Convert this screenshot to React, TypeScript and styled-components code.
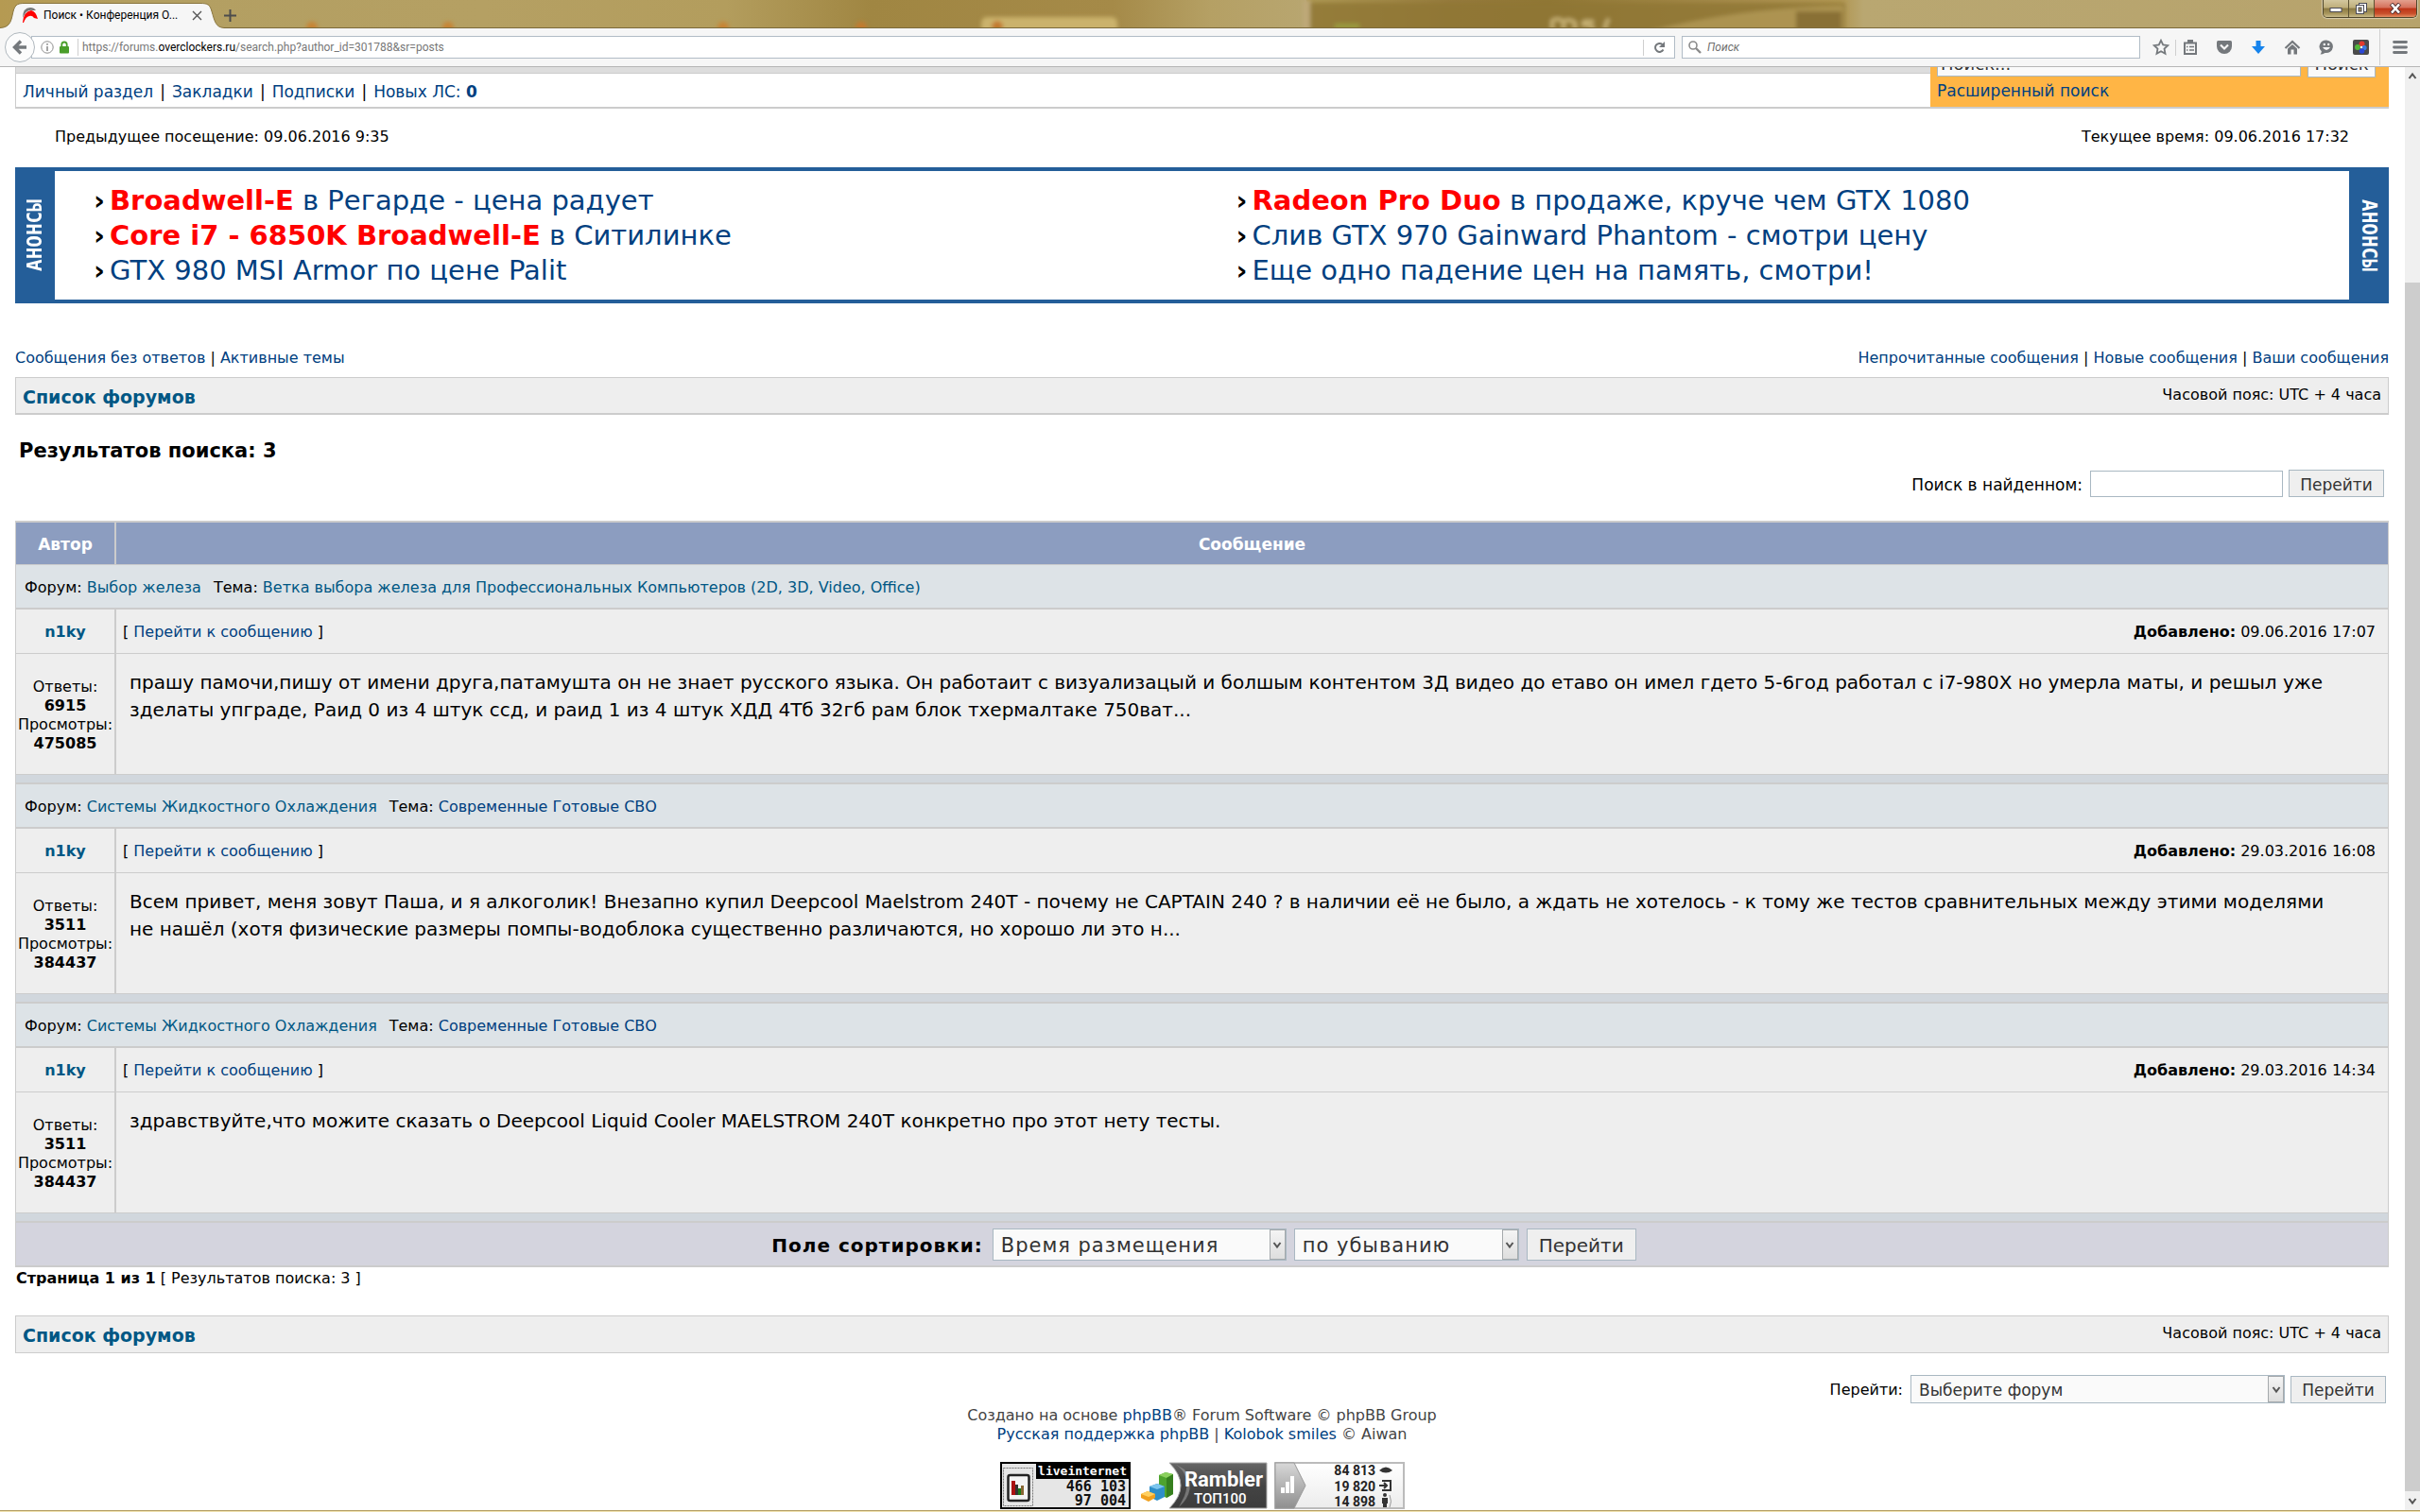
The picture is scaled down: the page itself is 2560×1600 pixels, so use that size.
import React from 'react';
import styled, { createGlobalStyle, css } from 'styled-components';

const FORUM_FONT = '"DejaVu Sans", sans-serif';
const CHROME_FONT = 'Roboto, "Noto Sans", sans-serif';
const LINE = '#cccccc';
const LINK = '#004080';
const TITLE = '#005784';

const GlobalStyle = createGlobalStyle`
  *, *::before, *::after { box-sizing: border-box; }
  html, body { margin: 0; padding: 0; background: #fff; }
  body { font-family: ${FORUM_FONT}; color: #000; }
  button, input, select { font-family: inherit; margin: 0; }
`;

/* ---------- browser window ---------- */

const Window = styled.div`
  display: flex;
  flex-direction: column;
  height: 100vh;
  overflow: hidden;
`;

const TitleBar = styled.header`
  position: relative;
  display: flex;
  align-items: stretch;
  flex: none;
  height: 30px;
  border-bottom: 1px solid #7c6a3a;
  background: linear-gradient(90deg, #b59a52 0, #b39f62 6%, #b5a063 20%, #b39d5d 30%, #a08642 36%, #a58a48 46%, #b5a064 50%, #b8a670 54%, #ad9752 54%, #94793a 60%, #8f7633 64%, #a68b4a 72%, #b09550 76%, #b9a771 77%, #b7a36c 100%);
`;

const Backdrop = styled.svg`
  position: absolute;
  inset: 0;
  width: 100%;
  height: 29px;
`;

const TabShape = styled.div`
  position: relative;
  display: flex;
  align-items: center;
  width: 237px;
  padding: 0 23px 0 24px;
  gap: 6px;
  font: 12px/16px ${CHROME_FONT};
  color: #000;
`;

const TabCurve = styled.svg`
  position: absolute;
  left: 0;
  top: 3px;
`;

const TabTitle = styled.span`
  position: relative;
  flex: 1;
  white-space: nowrap;
  padding-top: 3px;
`;

const TabIcon = styled.svg`
  position: relative;
  flex: none;
  margin-top: 3px;
`;

const PlainButton = styled.button`
  display: inline-flex;
  align-items: center;
  justify-content: center;
  position: relative;
  padding: 0;
  border: 0;
  background: none;
`;

const TabClose = styled(PlainButton)`
  width: 11px;
  padding-top: 3px;
`;

const NewTab = styled(PlainButton)`
  width: 13px;
  padding-top: 3px;
`;

const WindowControls = styled.div`
  position: relative;
  display: flex;
  height: 19px;
  margin-left: auto;
  margin-right: 3px;
  border: 1px solid #4f4629;
  border-top: 0;
  border-radius: 0 0 5px 5px;
  overflow: hidden;
  box-shadow: 0 0 1px 1px rgba(255, 255, 255, 0.45);
`;

const ControlButton = styled(PlainButton)<{ $close?: boolean }>`
  width: ${p => (p.$close ? 44 : 27)}px;
  border-right: ${p => (p.$close ? '0' : '1px solid #5d5333')};
  background: ${p => p.$close
    ? 'linear-gradient(#e3a08e 0, #d5705a 45%, #bd3418 50%, #c9502b 80%, #e58e62 100%)'
    : 'linear-gradient(#d3c79f 0, #beae7a 45%, #8b7a44 50%, #a8965c 80%, #c9bb8a 100%)'};
`;

const NavBar = styled.nav`
  display: flex;
  align-items: center;
  flex: none;
  height: 41px;
  padding-left: 5px;
  border-bottom: 1px solid #b6b6b6;
  background: #f6f6f6;
  font: 12px/16px ${CHROME_FONT};
`;

const BackButton = styled(PlainButton)`
  z-index: 1;
  flex: none;
  width: 32px;
  height: 32px;
  border: 1px solid #b0b8be;
  border-radius: 50%;
  background: #fcfcfc;
`;

const UrlBar = styled.div`
  display: flex;
  align-items: center;
  flex: 1;
  height: 24px;
  margin-left: -4px;
  padding-left: 9px;
  border: 1px solid #b1bcc6;
  background: #fff;
`;

const LockIcon = styled.svg`
  margin-left: 5px;
`;

const UrlText = styled.a`
  flex: 1;
  margin-left: 4px;
  color: #777;
  text-decoration: none;
  b { font-weight: 400; color: #000; }
`;

const Divider = styled.i<{ $h: number; $m: string }>`
  flex: none;
  width: 1px;
  height: ${p => p.$h}px;
  margin: ${p => p.$m};
  background: #cfcfcf;
`;

const Reload = styled(PlainButton)`
  width: 32px;
  height: 22px;
`;

const QuickSearch = styled.label`
  display: flex;
  align-items: center;
  gap: 6px;
  width: 485px;
  height: 24px;
  margin-left: 7px;
  padding-left: 6px;
  border: 1px solid #b1bcc6;
  background: #fff;
  input {
    flex: 1;
    border: 0;
    padding: 0;
    background: none;
    outline: 0;
    font: italic 12px/16px ${CHROME_FONT};
  }
  input::placeholder { color: #6f6f6f; opacity: 1; }
`;

const Tools = styled.div`
  display: flex;
  align-items: center;
  margin-left: 12px;
  margin-right: 11px;
`;

const ToolButton = styled(PlainButton)<{ $gap?: number }>`
  width: 20px;
  height: 24px;
  margin-right: ${p => p.$gap ?? 16}px;
`;

const Viewport = styled.div`
  display: flex;
  flex: 1;
  min-height: 0;
`;

const ScrollTrack = styled.div`
  display: flex;
  flex-direction: column;
  align-items: center;
  flex: none;
  width: 16px;
  background: #f0f0f0;
`;

const ScrollArrow = styled(PlainButton)`
  flex: none;
  width: 16px;
  height: 20px;
`;

const ScrollSpace = styled.div`
  flex: 208;
`;

const ScrollThumb = styled.div`
  flex: 1280;
  width: 100%;
  background: #cdcdcd;
`;

const WindowEdge = styled.div`
  flex: none;
  height: 2px;
  border-top: 1px solid #b39e64;
  background: #f0e2b0;
`;

/* ---------- forum page ---------- */

const Page = styled.main`
  flex: 1;
  min-width: 0;
  overflow: hidden;
  padding: 0 17px 0 16px;
  font-size: 16px;
  line-height: 20px;
`;

const Link = styled.a<{ $title?: boolean }>`
  color: ${p => (p.$title ? TITLE : LINK)};
  text-decoration: none;
`;

const UserBar = styled.section`
  display: flex;
  height: 44px;
  border-bottom: 2px solid ${LINE};
`;

const UserCell = styled.div`
  flex: 1;
  display: flex;
  flex-direction: column;
  border-left: 1px solid ${LINE};
  &::before {
    content: '';
    height: 7px;
    background: #ddd;
    border-bottom: 1px solid ${LINE};
  }
`;

const UserLinks = styled.div`
  flex: 1;
  display: flex;
  gap: 7px;
  padding: 9px 0 0 7px;
  font-size: 17px;
`;

const SearchCell = styled.form`
  display: flex;
  flex-direction: column;
  justify-content: flex-end;
  width: 485px;
  padding: 0 14px 7px 7px;
  overflow: hidden;
  background: #ffb545;
  font-size: 17px;
`;

const SearchFields = styled.div`
  display: flex;
  align-items: flex-start;
  gap: 7px;
  margin-bottom: 4px;
`;

const fieldBase = css`
  border: 1px solid #a9b8c2;
  border-radius: 0;
  color: #333;
  background: #fafafa;
`;

const HeaderInput = styled.input`
  ${fieldBase}
  flex: 1;
  min-width: 0;
  height: 28px;
  padding: 0 3px;
  font-size: 18px;
  &::placeholder { color: #333; opacity: 1; }
`;

const HeaderButton = styled.button`
  ${fieldBase}
  width: 72px;
  height: 29px;
  padding: 0;
  font-size: 18px;
`;

const Visits = styled.div`
  display: flex;
  justify-content: space-between;
  padding: 20px 42px 22px;
`;

const Announce = styled.section`
  display: flex;
  align-items: stretch;
  background: #245e99;
  border: solid #245e99;
  border-width: 4px 0;
`;

const AnnounceSide = styled.div<{ $up?: boolean }>`
  display: flex;
  align-items: center;
  justify-content: center;
  flex: none;
  width: 42px;
  color: #fff;
  font: bold 21px/22px "DejaVu Sans Mono", monospace;
  writing-mode: vertical-rl;
  ${p => p.$up && 'transform: rotate(180deg);'}
`;

const AnnounceGrid = styled.ul`
  flex: 1;
  display: grid;
  grid-template-columns: 1fr 1fr;
  margin: 0;
  padding: 13px 5px 12px;
  list-style: none;
  background: #fff;
  font-size: 29px;
  line-height: 37px;
`;

const AnnounceItem = styled.li`
  display: flex;
  padding-left: 36px;
  &::before {
    content: '›';
    flex: none;
    width: 17px;
    font-weight: 700;
  }
  strong { color: #f00; }
`;

const LinkRow = styled.div`
  display: flex;
  justify-content: space-between;
  padding: 48px 0 10px;
`;

const Crumbs = styled.div<{ $thick?: boolean }>`
  display: flex;
  justify-content: space-between;
  height: 40px;
  padding: 8px 7px;
  border: 1px solid ${LINE};
  border-bottom-width: ${p => (p.$thick ? 2 : 1)}px;
  background: #eee;
`;

const CrumbTitle = styled(Link)`
  font-size: 19px;
  line-height: 24px;
  font-weight: 700;
`;

const Heading = styled.h1`
  margin: 26px 0 0;
  padding-left: 4px;
  font-size: 21px;
  line-height: 24px;
`;

const FormRow = styled.form<{ $m: string; $size: number }>`
  display: flex;
  justify-content: flex-end;
  align-items: center;
  margin: ${p => p.$m};
  gap: 6px;
  font-size: ${p => p.$size}px;
  label { margin-right: 2px; padding-top: 2px; }
`;

const TextInput = styled.input`
  ${fieldBase}
  width: 204px;
  height: 28px;
  background: #fff;
`;

const SubmitButton = styled.button<{ $large?: boolean }>`
  ${fieldBase}
  width: ${p => (p.$large ? 116 : 101)}px;
  height: ${p => (p.$large ? 34 : 29)}px;
  padding: 2px 0 0;
  background: #efefef;
  font-size: ${p => (p.$large ? 20 : 17)}px;
`;

const SelectBox = styled.span<{ $w: number; $large?: boolean }>`
  position: relative;
  display: inline-block;
  width: ${p => p.$w}px;
  height: ${p => (p.$large ? 34 : 30)}px;
  select {
    ${fieldBase}
    appearance: none;
    width: 100%;
    height: 100%;
    padding: 2px 8px 0;
    font-size: ${p => (p.$large ? 21 : 17)}px;
    letter-spacing: inherit;
  }
`;

const SelectArrow = styled.span`
  position: absolute;
  top: 1px;
  right: 1px;
  bottom: 1px;
  width: 17px;
  display: flex;
  align-items: center;
  justify-content: center;
  border: 1px solid #a5a9ac;
  background: linear-gradient(#f4f4f4, #dedede);
  pointer-events: none;
`;

const Results = styled.table`
  width: 100%;
  border-collapse: separate;
  border-spacing: 0;
  border: 1px solid ${LINE};
  border-width: 2px 1px 0;
  table-layout: fixed;
`;

const HeadCell = styled.th<{ $author?: boolean }>`
  width: ${p => (p.$author ? '106px' : 'auto')};
  height: 45px;
  padding: 2px 0 0;
  border-bottom: 1px solid ${LINE};
  border-right: ${p => (p.$author ? `2px solid ${LINE}` : '0')};
  background: #8c9dc0;
  color: #fff;
  font-size: 17px;
`;

const TopicCell = styled.td`
  height: 47px;
  padding: 2px 9px 0;
  border-bottom: 2px solid ${LINE};
  background: #dde3e7;
  span { margin-right: 13px; }
`;

const AuthorCell = styled.td<{ $stats?: boolean }>`
  height: ${p => (p.$stats ? 128 : 47)}px;
  padding: 2px 0 0;
  border-bottom: 1px solid ${LINE};
  border-right: 2px solid ${LINE};
  background: #eee;
  text-align: center;
`;

const InfoCell = styled.td`
  padding: 2px 13px 0 7px;
  border-bottom: 1px solid ${LINE};
  background: #eee;
`;

const InfoLine = styled.div`
  display: flex;
  justify-content: space-between;
`;

const PostCell = styled.td`
  padding: 16px 50px 0 14px;
  border-bottom: 1px solid ${LINE};
  background: #eee;
  vertical-align: top;
  font-size: 20px;
  line-height: 29px;
`;

const SpacerCell = styled.td`
  height: 10px;
  padding: 0;
  border-bottom: 2px solid ${LINE};
  background: #d1d7dd;
`;

const SortCell = styled.td`
  padding: 6px 0 5px 4px;
  border-bottom: 2px solid ${LINE};
  background: #d4d4de;
`;

const SortForm = styled.form`
  display: flex;
  justify-content: center;
  align-items: center;
  gap: 8px;
  height: 34px;
  font-size: 20px;
  font-weight: 700;
  letter-spacing: 1px;
  label { margin-right: 2px; padding-top: 2px; }
`;

const PageCount = styled.div`
  padding: 2px 1px 29px;
`;

const Footer = styled.footer`
  text-align: center;
  color: #444;
`;

const Counters = styled.div`
  display: flex;
  justify-content: center;
  gap: 7px;
  margin-top: 19px;
`;

/* ---------- drawings ---------- */

const g = '#74787c';

const Chevron = ({ up }: { up?: boolean }) => (
  <svg width="10" height="10" viewBox="0 0 10 10">
    <path d={up ? 'M1.5 7 5 2.5 8.500 7' : 'M1.500 3 5 7.500 8.500 3'} fill="none" stroke="#555" strokeWidth="2" />
  </svg>
);

const posts = [
  {
    forum: 'Выбор железа', topic: 'Ветка выбора железа для Профессиональных Компьютеров (2D, 3D, Video, Office)', titleTopic: true,
    date: '09.06.2016 17:07', replies: '6915', views: '475085',
    text: 'прашу памочи,пишу от имени друга,патамушта он не знает русского языка. Он работаит с визуализацый и болшым контентом 3Д видео до етаво он имел гдето 5-6год работал с i7-980X но умерла маты, и решыл уже зделаты упграде, Раид 0 из 4 штук ссд, и раид 1 из 4 штук ХДД 4Тб 32гб рам блок тхермалтаке 750ват...',
  },
  {
    forum: 'Системы Жидкостного Охлаждения', topic: 'Современные Готовые СВО', titleTopic: false,
    date: '29.03.2016 16:08', replies: '3511', views: '384437',
    text: 'Всем привет, меня зовут Паша, и я алкоголик! Внезапно купил Deepcool Maelstrom 240T - почему не CAPTAIN 240 ? в наличии её не было, а ждать не хотелось - к тому же тестов сравнительных между этими моделями не нашёл (хотя физические размеры помпы-водоблока существенно различаются, но хорошо ли это н...',
  },
  {
    forum: 'Системы Жидкостного Охлаждения', topic: 'Современные Готовые СВО', titleTopic: false,
    date: '29.03.2016 14:34', replies: '3511', views: '384437',
    text: 'здравствуйте,что можите сказать о Deepcool Liquid Cooler MAELSTROM 240T конкретно про этот нету тесты.',
  },
];

const BrowserChrome = () => (
  <>
    <TitleBar>
      <Backdrop preserveAspectRatio="none" viewBox="0 0 2560 29">
        <defs><filter id="soft"><feGaussianBlur stdDeviation="2" /></filter></defs>
        <g filter="url(#soft)">
          <rect x="1386" y="3" width="566" height="40" fill="#8f7633" opacity=".8" />
          <path d="M1740 34 Q1840 8 1950 6V34Z" fill="#b39a56" opacity=".8" />
          <rect x="1900" y="12" width="48" height="20" fill="#897034" />
          <rect x="1038" y="18" width="144" height="20" rx="6" fill="#cbb26c" />
          <rect x="1378" y="0" width="8" height="34" fill="#bda878" />
          <circle cx="330" cy="29" r="6" fill="#c78436" /><circle cx="474" cy="29" r="6" fill="#c78436" />
          <circle cx="765" cy="29" r="6" fill="#c78436" /><circle cx="911" cy="29" r="6" fill="#c27a2e" /><circle cx="1055" cy="28" r="6" fill="#c27a2e" />
          <path d="M1642 32V21M1642 22q6-4 12 1v9M1654 23q6-4 12 1v8M1686 23q-13-2-11 3 13 1 9 6M1702 20q-4 5-4 12" stroke="#d2bd82" strokeWidth="4" fill="none" opacity=".8" />
          <path d="M1412 28h26" stroke="#9a9a3e" strokeWidth="6" />
        </g>
      </Backdrop>
      <TabShape>
        <TabCurve width="237" height="27" viewBox="0 0 237 27">
          <path d="M0 26.500C12 26 12 17 14 9 16 1 20 .5 26 .5H212C220 .5 222 2 224 9 227 19 228 26 237 26.500V28H0Z" fill="#f6f6f6" stroke="#8a763f" />
        </TabCurve>
        <TabIcon width="16" height="16" viewBox="0 0 16 16">
          <path d="M0 11Q0 0 8 0 12 0 14 3L11 3Q4 1 0 11Z" fill="#777" />
          <path d="M0 16Q1 4 9 3 14 4 16 12L12 11Q10 8 7 9 3 10 1 16Z" fill="#f00" />
        </TabIcon>
        <TabTitle>Поиск • Конференция O...</TabTitle>
        <TabClose aria-label="Закрыть вкладку">
          <svg width="11" height="11" viewBox="0 0 11 11"><path d="M1 1 10 10M10 1 1 10" stroke="#555" strokeWidth="1.400" /></svg>
        </TabClose>
      </TabShape>
      <NewTab aria-label="Новая вкладка">
        <svg width="13" height="13" viewBox="0 0 13 13"><path d="M6.500 0V13M0 6.500H13" stroke="#4c4c4c" strokeWidth="2" /></svg>
      </NewTab>
      <WindowControls>
        <ControlButton aria-label="Свернуть"><svg width="14" height="8" viewBox="0 0 14 8"><rect x="1" y="3.500" width="12" height="4" fill="#fff" stroke="#4a4a55" /></svg></ControlButton>
        <ControlButton aria-label="Восстановить">
          <svg width="14" height="14" viewBox="0 0 14 14"><rect x="4.500" y="1.500" width="8" height="9" fill="#fff" stroke="#4a4a55" /><rect x="1.500" y="3.500" width="8" height="9" fill="#fff" stroke="#4a4a55" /><rect x="4" y="6" width="3" height="4" fill="#a3915a" stroke="#4a4a55" /></svg>
        </ControlButton>
        <ControlButton $close aria-label="Закрыть"><svg width="14" height="12" viewBox="0 0 14 12"><path d="M2.500 1 11.500 11M11.500 1 2.500 11" stroke="#5a3535" strokeWidth="4.500" /><path d="M3 1.500 11 10.500M11 1.500 3 10.500" stroke="#fff" strokeWidth="2.600" /></svg></ControlButton>
      </WindowControls>
    </TitleBar>
    <NavBar>
      <BackButton aria-label="Назад">
        <svg width="16" height="16" viewBox="0 0 16 16"><path d="M9 1.500 2.500 8 9 14.500M3 8H15" fill="none" stroke={g} strokeWidth="3.400" /></svg>
      </BackButton>
      <UrlBar>
        <svg width="14" height="14" viewBox="0 0 14 14"><circle cx="7" cy="7" r="6.200" fill="none" stroke="#8d8d8d" /><path d="M7 6V11M7 3V4.800" stroke="#8d8d8d" strokeWidth="1.600" /></svg>
        <LockIcon width="12" height="14" viewBox="0 0 12 14"><rect x="1" y="6" width="10" height="7.500" rx="1" fill="#4a9e2a" /><path d="M3.300 7V4.200a2.700 2.700 0 0 1 5.400 0V7" fill="none" stroke="#4a9e2a" strokeWidth="1.800" /></LockIcon>
        <Divider $h={18} $m="0 0 0 8px" />
        <UrlText href="#">https://forums.<b>overclockers.ru</b>/search.php?author_id=301788&amp;sr=posts</UrlText>
        <Divider $h={17} $m="0" />
        <Reload aria-label="Обновить">
          <svg width="13" height="13" viewBox="0 0 13 13"><path d="M10.500 8.500A4.500 4.500 0 1 1 9.500 3" fill="none" stroke={g} strokeWidth="2" /><path d="M12 0V6H6Z" fill={g} /></svg>
        </Reload>
      </UrlBar>
      <QuickSearch>
        <svg width="14" height="14" viewBox="0 0 14 14"><circle cx="5" cy="5" r="4" fill="none" stroke="#8b8b8b" strokeWidth="1.600" /><path d="M8 8 13 13" stroke="#8b8b8b" strokeWidth="2.400" /></svg>
        <input placeholder="Поиск" aria-label="Поиск в интернете" />
      </QuickSearch>
      <Tools>
        <ToolButton $gap={5} aria-label="Добавить в закладки"><svg width="18" height="18" viewBox="0 0 18 18"><path d="M9 1.800 11.200 6.500 16.200 7.100 12.500 10.600 13.500 15.800 9 13.200 4.500 15.800 5.500 10.600 1.800 7.100 6.800 6.500Z" fill="none" stroke={g} strokeWidth="1.800" /></svg></ToolButton>
        <Divider $h={17} $m="0 5px 0 0" />
        <ToolButton aria-label="Закладки"><svg width="16" height="16" viewBox="0 0 16 16"><path d="M2 3.500H14V15H2Z" fill="none" stroke={g} strokeWidth="2" /><path d="M5 0H11V4H5Z" fill={g} /><path d="M4 7.500H5.500M7 7.500H12M4 11H5.500M7 11H12" stroke={g} strokeWidth="1.600" /></svg></ToolButton>
        <ToolButton aria-label="Pocket"><svg width="18" height="16" viewBox="0 0 18 16"><path d="M2.500 1H15.500Q17 1 17 2.500V7A8 8 0 0 1 1 7V2.500Q1 1 2.500 1Z" fill={g} /><path d="M5 5.500 9 9.500 13 5.500" fill="none" stroke="#f6f6f6" strokeWidth="2.200" /></svg></ToolButton>
        <ToolButton aria-label="Загрузки"><svg width="16" height="16" viewBox="0 0 16 16"><path d="M5.500 1H10.500V7H15L8 15 1 7H5.500Z" fill="#1583ec" /></svg></ToolButton>
        <ToolButton aria-label="Домой"><svg width="18" height="16" viewBox="0 0 18 16"><path d="M1.500 9 9 2 16.500 9" fill="none" stroke={g} strokeWidth="2.200" /><path d="M4 9.500 9 5 14 9.500V15.500H10.500V10.500H7.500V15.500H4Z" fill={g} /></svg></ToolButton>
        <ToolButton aria-label="Чат"><svg width="16" height="16" viewBox="0 0 16 16"><path d="M8 .5A7.200 6.800 0 1 1 6.500 14Q4 15.500 1.500 15.500 3 14 2.800 12.200A7.200 6.800 0 0 1 8 .5Z" fill={g} /><path d="M4 8Q8 14 12 8Z" fill="#f6f6f6" /><circle cx="5.800" cy="5" r="1.200" fill="#f6f6f6" /><circle cx="10.200" cy="5" r="1.200" fill="#f6f6f6" /></svg></ToolButton>
        <ToolButton $gap={10} aria-label="Расширение"><svg width="17" height="16" viewBox="0 0 17 16"><rect width="17" height="16" rx="2" fill="#4b4b4b" /><circle cx="9.500" cy="4.500" r="3" fill="#e23a2e" /><circle cx="5" cy="8" r="3" fill="#53b83a" /><circle cx="12" cy="8.500" r="2.600" fill="#3b7be0" /><circle cx="9.500" cy="12" r="2.800" fill="#2c48d6" /><circle cx="9" cy="8" r="1.200" fill="#fff" /></svg></ToolButton>
        <Divider $h={38} $m="0 11px 0 0" />
        <ToolButton $gap={0} aria-label="Меню"><svg width="16" height="14" viewBox="0 0 16 14"><path d="M1.500 1.500H14.500M1.500 7H14.500M1.500 12.500H14.500" stroke={g} strokeWidth="2.800" strokeLinecap="round" /></svg></ToolButton>
      </Tools>
    </NavBar>
  </>
);

const CounterBadges = () => (
  <Counters>
    <svg width="138" height="50" viewBox="0 0 138 50">
      <rect x="1" y="1" width="136" height="48" fill="#e6e6e6" stroke="#000" strokeWidth="2" />
      <rect x="38" y="1" width="99" height="17" fill="#000" />
      <rect x="3.500" y="6.500" width="31" height="40" fill="none" stroke="#777" strokeDasharray="2 1" />
      <rect x="8.500" y="14" width="22" height="27" rx="2" fill="#f4f4f4" stroke="#222" strokeWidth="2.500" />
      <path d="M12 20H16V35H12Z" fill="#a11" /><path d="M16 24H19V35H16Z" fill="#333" /><path d="M19 28H22V35H19Z" fill="#1a7a1a" /><path d="M22 25H25V35H22Z" fill="#863" />
      <text x="134" y="14" textAnchor="end" fontFamily="DejaVu Sans Mono" fontWeight="700" fontSize="13" fill="#fff">liveinternet</text>
      <text x="133" y="31" textAnchor="end" fontFamily="DejaVu Sans Mono" fontSize="15" fontWeight="700" fill="#111">466 103</text>
      <text x="133" y="46" textAnchor="end" fontFamily="DejaVu Sans Mono" fontSize="15" fontWeight="700" fill="#111">97 004</text>
    </svg>
    <svg width="138" height="50" viewBox="0 0 138 50">
      <defs><linearGradient id="rb" x1="0" y1="0" x2="0" y2="1"><stop offset="0" stopColor="#666" /><stop offset=".5" stopColor="#444" /><stop offset="1" stopColor="#3c3c3c" /></linearGradient></defs>
      <rect x=".5" y=".5" width="137" height="48" fill="#fff" />
      <path d="M34 1H137V49H34Q58 25 34 1Z" fill="url(#rb)" stroke="#aaa" />
      <path d="M40 2Q58 14 50 36L44 48Q64 30 50 8Z" fill="#999" opacity=".6" />
      <path d="M23 14 30 11 38 13V34L31 38 23 34Z" fill="#4ea32e" /><path d="M23 14 31 17 38 13 30 11Z" fill="#8bd05e" /><path d="M31 17V38L38 34V13Z" fill="#36801f" />
      <path d="M13 26 21 23 29 26V37L21 41 13 37Z" fill="#2f8fc8" /><path d="M13 26 21 29 29 26 21 23Z" fill="#7cc6ee" />
      <path d="M4 34 11 31 19 34V38L12 42 4 38Z" fill="#f0a01e" /><path d="M4 34 12 37 19 34 11 31Z" fill="#ffd060" />
      <text x="50" y="26" fontFamily="Roboto" fontWeight="700" fontSize="22" fill="#fff">Rambler</text>
      <text x="60" y="44" fontFamily="Roboto" fontWeight="500" fontSize="15" fill="#fff">ТОП100</text>
    </svg>
    <svg width="138" height="50" viewBox="0 0 138 50">
      <defs><linearGradient id="tm" x1="0" y1="0" x2="0" y2="1"><stop offset="0" stopColor="#d8d8d8" /><stop offset="1" stopColor="#8f8f8f" /></linearGradient><linearGradient id="tb" x1="0" y1="0" x2="0" y2="1"><stop offset="0" stopColor="#fff" /><stop offset="1" stopColor="#ececec" /></linearGradient></defs>
      <rect x="1" y="1" width="136" height="48" fill="url(#tb)" stroke="#bbb" strokeWidth="2" />
      <path d="M1 1H21L33 25 21 49H1Z" fill="url(#tm)" stroke="#999" />
      <path d="M7 27h4v6H7ZM12 21h4v12h-4ZM17 15h4v18h-4Z" fill="#fff" />
      <g fontFamily="Roboto" fontWeight="700" fontSize="14" fill="#222" textAnchor="end">
        <text x="107" y="14">84 813</text><text x="107" y="31">19 820</text><text x="107" y="47">14 898</text>
      </g>
      <path d="M111 9Q118 2 125 9 118 14 111 9Z" fill="#333" />
      <path d="M114 20H123V30H114M111 25H119M116 22 119 25 116 28" fill="none" stroke="#333" strokeWidth="2" />
      <circle cx="117" cy="35" r="2" fill="#333" /><path d="M114 38H120V44H119V48H115V44H114Z" fill="#333" /><path d="M122 35Q125 42 122 48" fill="none" stroke="#999" />
    </svg>
  </Counters>
);

const Breadcrumbs = ({ thick }: { thick?: boolean }) => (
  <Crumbs $thick={thick}>
    <CrumbTitle href="#" $title>Список форумов</CrumbTitle>
    <span>Часовой пояс: UTC + 4 часа</span>
  </Crumbs>
);

export default function App() {
  return (
    <Window>
      <GlobalStyle />
      <BrowserChrome />
      <Viewport>
        <Page>
          <UserBar>
            <UserCell>
              <UserLinks>
                <Link href="#">Личный раздел</Link>
                <span>|</span>
                <Link href="#">Закладки</Link>
                <span>|</span>
                <Link href="#">Подписки</Link>
                <span>|</span>
                <Link href="#">Новых ЛС: <b>0</b></Link>
              </UserLinks>
            </UserCell>
            <SearchCell>
              <SearchFields>
                <HeaderInput placeholder="Поиск..." aria-label="Поиск по форуму" />
                <HeaderButton type="button">Поиск</HeaderButton>
              </SearchFields>
              <Link href="#">Расширенный поиск</Link>
            </SearchCell>
          </UserBar>

          <Visits>
            <span>Предыдущее посещение: 09.06.2016 9:35</span>
            <span>Текущее время: 09.06.2016 17:32</span>
          </Visits>

          <Announce>
            <AnnounceSide $up>АНОНСЫ</AnnounceSide>
            <AnnounceGrid>
              <AnnounceItem><Link href="#"><strong>Broadwell-E</strong> в Регарде - цена радует</Link></AnnounceItem>
              <AnnounceItem><Link href="#"><strong>Radeon Pro Duo</strong> в продаже, круче чем GTX 1080</Link></AnnounceItem>
              <AnnounceItem><Link href="#"><strong>Core i7 - 6850K Broadwell-E</strong> в Ситилинке</Link></AnnounceItem>
              <AnnounceItem><Link href="#">Слив GTX 970 Gainward Phantom - смотри цену</Link></AnnounceItem>
              <AnnounceItem><Link href="#">GTX 980 MSI Armor по цене Palit</Link></AnnounceItem>
              <AnnounceItem><Link href="#">Еще одно падение цен на память, смотри!</Link></AnnounceItem>
            </AnnounceGrid>
            <AnnounceSide>АНОНСЫ</AnnounceSide>
          </Announce>

          <LinkRow>
            <span><Link href="#">Сообщения без ответов</Link> | <Link href="#">Активные темы</Link></span>
            <span><Link href="#">Непрочитанные сообщения</Link> | <Link href="#">Новые сообщения</Link> | <Link href="#">Ваши сообщения</Link></span>
          </LinkRow>
          <Breadcrumbs thick />

          <Heading>Результатов поиска: 3</Heading>
          <FormRow $m="8px 5px 25px 0" $size={17}>
            <label htmlFor="within">Поиск в найденном:</label>
            <TextInput id="within" />
            <SubmitButton type="button">Перейти</SubmitButton>
          </FormRow>

          <Results>
            <thead>
              <tr><HeadCell $author>Автор</HeadCell><HeadCell>Сообщение</HeadCell></tr>
            </thead>
            <tbody>
              {posts.map(p => (
                <React.Fragment key={p.date}>
                  <tr>
                    <TopicCell colSpan={2}>
                      <span>Форум: <Link href="#" $title>{p.forum}</Link></span>
                      Тема: <Link href="#" $title={p.titleTopic}>{p.topic}</Link>
                    </TopicCell>
                  </tr>
                  <tr>
                    <AuthorCell><Link href="#" $title><b>n1ky</b></Link></AuthorCell>
                    <InfoCell>
                      <InfoLine>
                        <span>[ <Link href="#">Перейти к сообщению</Link> ]</span>
                        <span><b>Добавлено:</b> {p.date}</span>
                      </InfoLine>
                    </InfoCell>
                  </tr>
                  <tr>
                    <AuthorCell $stats>Ответы:<br /><b>{p.replies}</b><br />Просмотры:<br /><b>{p.views}</b></AuthorCell>
                    <PostCell>{p.text}</PostCell>
                  </tr>
                  <tr><SpacerCell colSpan={2} /></tr>
                </React.Fragment>
              ))}
              <tr>
                <SortCell colSpan={2}>
                  <SortForm>
                    <label htmlFor="sort">Поле сортировки:</label>
                    <SelectBox $w={311} $large>
                      <select id="sort"><option>Время размещения</option></select>
                      <SelectArrow><Chevron /></SelectArrow>
                    </SelectBox>
                    <SelectBox $w={238} $large>
                      <select aria-label="Порядок"><option>по убыванию</option></select>
                      <SelectArrow><Chevron /></SelectArrow>
                    </SelectBox>
                    <SubmitButton type="button" $large>Перейти</SubmitButton>
                  </SortForm>
                </SortCell>
              </tr>
            </tbody>
          </Results>
          <PageCount><b>Страница 1 из 1</b> [ Результатов поиска: 3 ]</PageCount>

          <Breadcrumbs />
          <FormRow $m="23px 3px 3px 0" $size={16}>
            <label htmlFor="jump">Перейти:</label>
            <SelectBox $w={396}>
              <select id="jump"><option>Выберите форум</option></select>
              <SelectArrow><Chevron /></SelectArrow>
            </SelectBox>
            <SubmitButton type="button">Перейти</SubmitButton>
          </FormRow>

          <Footer>
            Создано на основе <Link href="#">phpBB</Link>® Forum Software © phpBB Group<br />
            <Link href="#">Русская поддержка phpBB</Link> | <Link href="#">Kolobok smiles</Link> © Aiwan
            <CounterBadges />
          </Footer>
        </Page>
        <ScrollTrack>
          <ScrollArrow aria-label="Вверх"><Chevron up /></ScrollArrow>
          <ScrollSpace />
          <ScrollThumb />
          <ScrollArrow aria-label="Вниз"><Chevron /></ScrollArrow>
        </ScrollTrack>
      </Viewport>
      <WindowEdge />
    </Window>
  );
}
